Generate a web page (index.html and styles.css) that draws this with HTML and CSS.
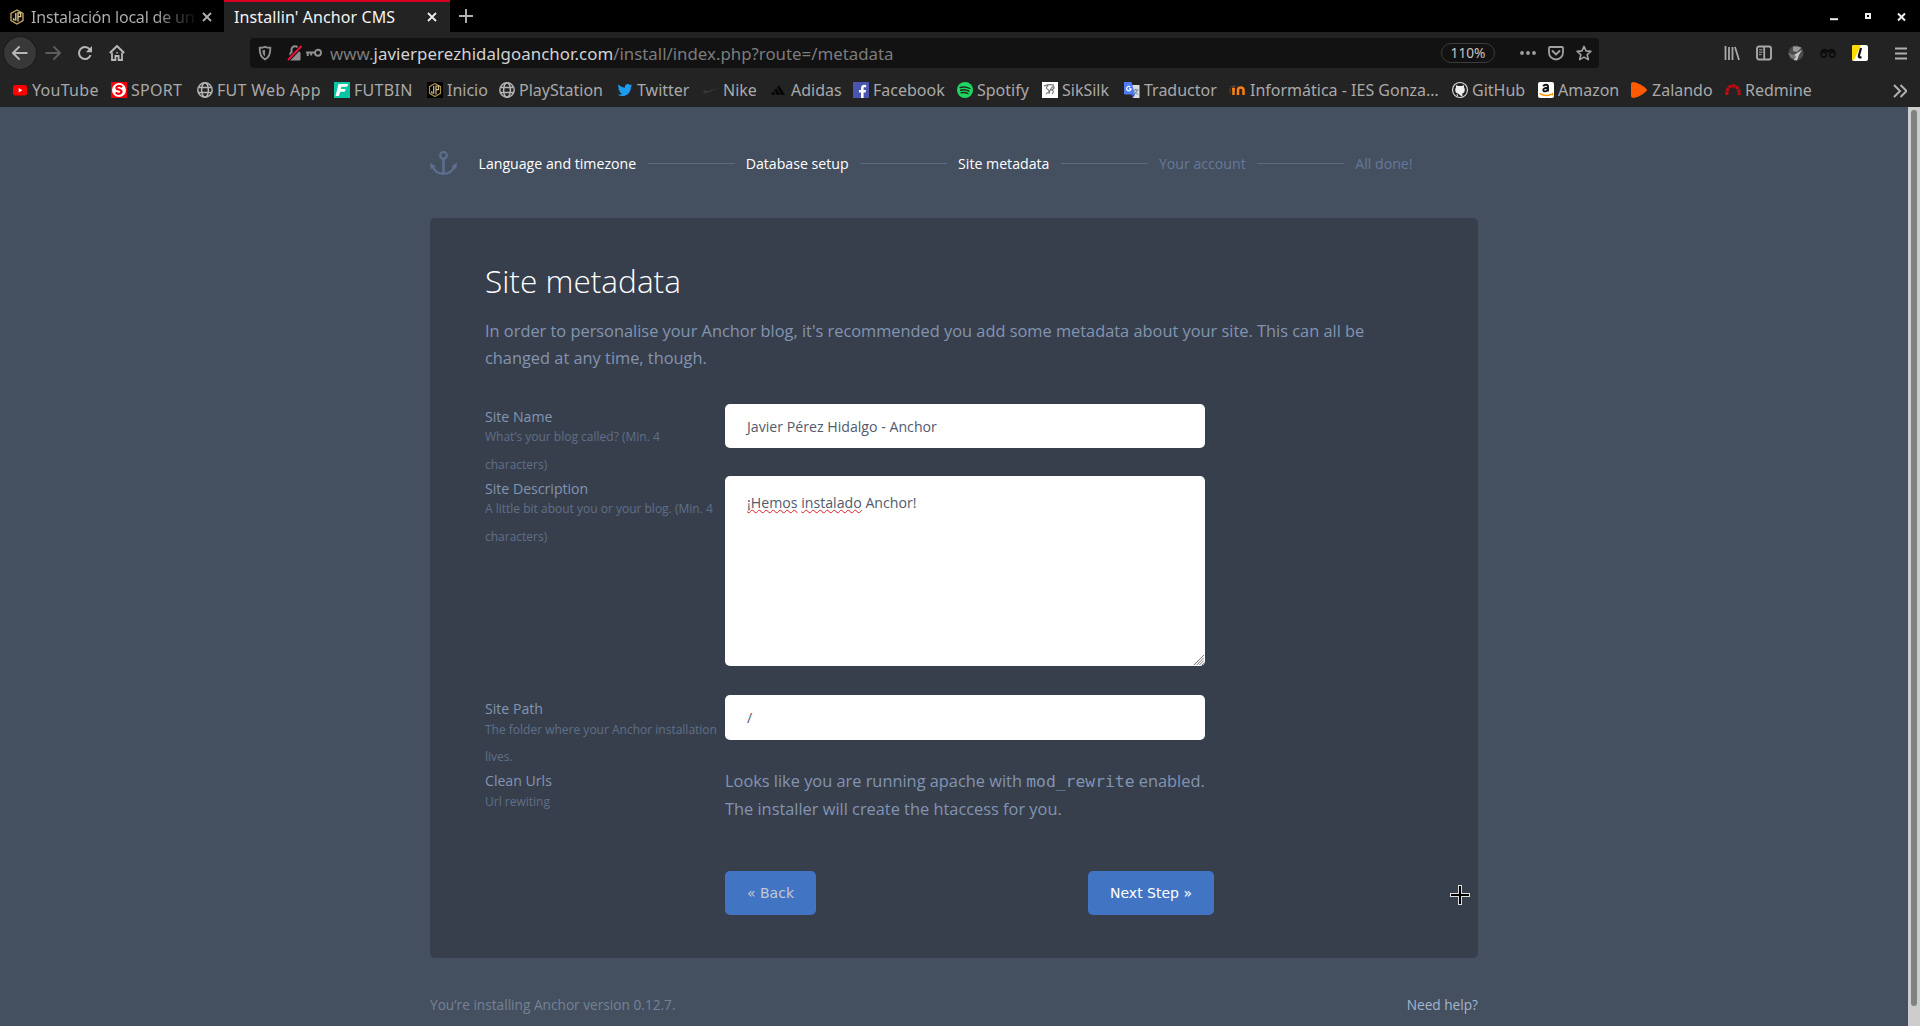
FILE: index.html
```html
<!DOCTYPE html>
<html lang="en">
<head>
<meta charset="utf-8">
<title>Installin' Anchor CMS</title>
<link rel="stylesheet" href="styles.css">
</head>
<body>
<div class="browser">
  <header class="tabs">
    <div class="tab">
      <svg class="ico" viewBox="0 0 16 16"><path d="M8 1l6 3.4v7.2L8 15l-6-3.4V4.4z" fill="#0b0a06" stroke="#c2a45c" stroke-width="1.4"/><path d="M4.6 9.2v1.6l2.2.3V4M9 12.5V4h2.7v3.6H9" fill="none" stroke="#e0cb92" stroke-width="1.3"/></svg>
      <span class="tab-title faded">Instalación local de un</span>
      <svg class="x" viewBox="0 0 10 10"><path d="M1 1l8 8M9 1L1 9"/></svg>
    </div>
    <div class="tab active">
      <span class="tab-title">Installin' Anchor CMS</span>
      <svg class="x" viewBox="0 0 10 10"><path d="M1 1l8 8M9 1L1 9"/></svg>
    </div>
    <svg class="plus" viewBox="0 0 14 14"><path d="M7 0v14M0 7h14"/></svg>
    <svg class="winbtns" viewBox="0 0 78 10"><path d="M1 7.2h8" stroke="#eee" stroke-width="2"/><rect x="37" y="2" width="4" height="4" fill="none" stroke="#eee" stroke-width="2"/><path d="M69 1.5l7 7M76 1.5l-7 7" stroke="#eee" stroke-width="2"/></svg>
  </header>

  <div class="toolbar">
    <span class="back"><svg class="ico" viewBox="0 0 16 16"><path d="M15.5 8H1M7.6 1.4L1 8l6.600 6.600" fill="none" stroke="#b6b6b6" stroke-width="2"/></svg></span>
    <svg class="ico fwd" viewBox="0 0 16 16"><path d="M.5 8H15M8.400 1.400L15 8l-6.600 6.600" fill="none" stroke="#5d5d5d" stroke-width="2"/></svg>
    <svg class="ico reload" viewBox="0 0 16 16"><path d="M13.600 10.200A6 6 0 1 1 12.600 4.200" fill="none" stroke="#b6b6b6" stroke-width="2"/><path d="M15 1v6.200H8.800z" fill="#b6b6b6"/></svg>
    <svg class="ico home" viewBox="0 0 16 16"><path d="M.8 8L8 1l7.200 7" fill="none" stroke="#b6b6b6" stroke-width="2"/><path d="M3 7.500V15h3.400v-4h3.200v4H13V7.500" fill="none" stroke="#b6b6b6" stroke-width="1.800"/><path d="M7.300 7h1.500v1.500H7.300z" fill="#b6b6b6"/></svg>
    <div class="url">
      <svg class="ico shield" viewBox="0 0 16 16"><path d="M8 1.800c2 .8 3.600 1 5.300 1 .2 5-.6 9.300-5.300 11.700C3.300 12.100 2.500 7.800 2.700 2.800c1.700 0 3.300-.2 5.300-1z" fill="none" stroke="#8f8f8f" stroke-width="1.900"/><path d="M8 4.700v6.800c-2-1.400-2.500-3.500-2.600-6.200 1 0 1.800-.2 2.600-.6z" fill="#8f8f8f"/></svg>
      <svg class="ico lock" viewBox="0 0 16 16"><path d="M4.500 8V4.800a3.500 3.500 0 0 1 7 0V8" fill="none" stroke="#8f8f8f" stroke-width="2"/><rect x="2.500" y="7" width="11" height="8.500" rx="1.200" fill="#8f8f8f"/><path d="M1 15L14.500 1" stroke="#121212" stroke-width="4"/><path d="M1 15L14.500 1" stroke="#e8123c" stroke-width="2"/></svg>
      <svg class="ico key" viewBox="0 0 16 16"><circle cx="12" cy="7.800" r="3" fill="none" stroke="#8f8f8f" stroke-width="1.900"/><path d="M9.500 7.500H0M1.800 7.500V11M5.200 7.500v3" fill="none" stroke="#8f8f8f" stroke-width="2"/></svg>
      <span class="addr">www.<b>javierperezhidalgoanchor.com</b>/install/index.php?route=/metadata</span>
      <span class="zoom">110%</span>
      <svg class="ico" viewBox="0 0 16 16" fill="#a0a0a0"><circle cx="2" cy="8" r="1.900"/><circle cx="8" cy="8" r="1.900"/><circle cx="14" cy="8" r="1.900"/></svg>
      <svg class="ico" viewBox="0 0 16 16"><path d="M2 2h12a1 1 0 0 1 1 1v4.500a7 7 0 0 1-14 0V3a1 1 0 0 1 1-1z" fill="none" stroke="#a0a0a0" stroke-width="1.800"/><path d="M4.500 6L8 9.400 11.500 6" fill="none" stroke="#a0a0a0" stroke-width="1.900" stroke-linecap="round"/></svg>
      <svg class="ico" viewBox="0 0 16 16"><path d="M8 1.400l2 4.500 4.900.5-3.700 3.300 1.100 4.900L8 12.100l-4.300 2.500 1.100-4.900L1.100 6.400 6 5.900z" fill="none" stroke="#a0a0a0" stroke-width="1.600" stroke-linejoin="round"/></svg>
    </div>
    <div class="exts">
      <svg class="ico" viewBox="0 0 16 16"><path d="M1.500 1v14M5 2v13M8.500 2v13M11 2l4 13" fill="none" stroke="#a8a8a8" stroke-width="1.800"/></svg>
      <svg class="ico" viewBox="0 0 16 16"><rect x="1" y="1.500" width="14" height="13" rx="2" fill="none" stroke="#a8a8a8" stroke-width="1.900"/><path d="M8.200 2v12" stroke="#a8a8a8" stroke-width="1.800"/><path d="M3 4.800h3.500M3 7.200h3.500M3 9.600h2.500" stroke="#a8a8a8"/></svg>
      <svg class="ico" viewBox="0 0 16 16"><circle cx="8" cy="8" r="7.500" fill="#4b4b4b"/><path d="M5 1.500h4l4.500 1L9 7 5 6z" fill="#999"/><path d="M6 10l8-5-3 5-2 5.500-3-.5z" fill="#c8c8c8"/><path d="M0 8l6 2 2 1-1 3-4-1z" fill="#777"/></svg>
      <svg class="ico" viewBox="0 0 16 16"><path d="M1 8Q3 4 5 5l3 1.500L11 5q2-1 4 3" fill="none" stroke="#0a0a0a" stroke-width="2"/><circle cx="3.700" cy="9.600" r="2.700" fill="none" stroke="#0a0a0a" stroke-width="1.500"/><circle cx="12.300" cy="9.600" r="2.700" fill="none" stroke="#0a0a0a" stroke-width="1.500"/></svg>
      <svg class="ico" viewBox="0 0 16 16"><rect width="16" height="16" rx="2" fill="#fff"/><path d="M2 0h7L2.500 14 .5 15.500Q0 15 0 14V2a2 2 0 0 1 2-2z" fill="#ffdc00"/><path d="M9 3L6.800 11q-.2 1.500 1.200 1.300h1.500" fill="none" stroke="#111" stroke-width="2.200"/></svg>
      <svg class="burger" viewBox="0 0 12 13"><path d="M0 1.500h12M0 6.500h12M0 11.500h12" stroke="#b0b0b0" stroke-width="1.800"/></svg>
    </div>
  </div>

  <nav class="bookmarks">
    <a class="spaced"><svg class="ico" viewBox="0 0 16 16"><rect x="1" y="3" width="14" height="10.500" rx="2.500" fill="#f00"/><path d="M6.700 6v4.500l3.600-2.200z" fill="#fff"/></svg>YouTube</a>
    <a class="spaced"><svg class="ico" viewBox="0 0 16 16"><path d="M0 0h16v16H0z" fill="#f3000b"/><circle cx="8" cy="8" r="7" fill="#fff"/><path d="M11 5.200Q9.500 3.400 7.200 4 4.800 4.800 5.800 6.700c.8 1 4.600.9 4.700 2.900 0 2.700-4 2.800-5.700.9" fill="none" stroke="#f3000b" stroke-width="2.200"/></svg>SPORT</a>
    <a class="spaced"><svg class="ico" viewBox="0 0 16 16"><g fill="none" stroke="#b4b4b4" stroke-width="1.500"><circle cx="8" cy="8" r="7.200"/><ellipse cx="8" cy="8" rx="3.400" ry="7.200"/><path d="M1.500 5.400h13M1.500 10.600h13"/></g></svg>FUT Web App</a>
    <a class="spaced"><svg class="ico" viewBox="0 0 16 16"><path d="M0 0h16v16H0z" fill="#08c5a4"/><path d="M4.500 2H14l-.8 2.800H7.300L6.800 7h4.800l-.8 2.700H6.100L5 14H1.500z" fill="#fff"/></svg>FUTBIN</a>
    <a><svg class="ico" viewBox="0 0 16 16"><path d="M0 0h16v16H0z"/><path d="M8 1.500l5.500 3.200v6.600L8 14.500l-5.500-3.200V4.700z" fill="none" stroke="#a88c48" stroke-width="1.200"/><path d="M4.700 9.200v1.600l2 .3V4M9 12.500V4h2.500v3.600H9" fill="none" stroke="#d2bd82" stroke-width="1.200"/></svg>Inicio</a>
    <a><svg class="ico" viewBox="0 0 16 16"><g fill="none" stroke="#b4b4b4" stroke-width="1.500"><circle cx="8" cy="8" r="7.200"/><ellipse cx="8" cy="8" rx="3.400" ry="7.200"/><path d="M1.500 5.400h13M1.500 10.600h13"/></g></svg>PlayStation</a>
    <a><svg class="ico" viewBox="-1 -1 26 26"><path fill="#1d9bf0" d="M23.950 4.570a10 10 0 0 1-2.820.77 4.960 4.960 0 0 0 2.160-2.720 9.900 9.900 0 0 1-3.120 1.180 4.920 4.920 0 0 0-8.380 4.480C7.690 8.090 4.070 6.130 1.640 3.160a4.920 4.920 0 0 0 1.520 6.570 4.900 4.900 0 0 1-2.230-.61v.06a4.920 4.920 0 0 0 3.950 4.830 5 5 0 0 1-2.210.08 4.940 4.940 0 0 0 4.600 3.420A9.870 9.870 0 0 1 0 19.540a14 14 0 0 0 7.550 2.210c9.050 0 14-7.500 14-13.980 0-.21 0-.42-.02-.63a9.900 9.900 0 0 0 2.420-2.570z"/></svg>Twitter</a>
    <a><svg class="ico" viewBox="0 0 16 16"><path d="M2 7C-1 11 1 12 4 11l12-5-11.500 3C1.500 9.700 1.500 8.500 2 7z" fill="#3a3a3a"/></svg>Nike</a>
    <a><svg class="ico" viewBox="0 0 16 16"><path d="M6 5l2.300-1.300L14 13h-3.500zM3 8l2.500-1.400L9.500 13H6zM0 11l2.500-1.300L4.600 13H1.200z" fill="#050505"/></svg>Adidas</a>
    <a><svg class="ico" viewBox="0 0 16 16"><path d="M0 0h16v16H0z" fill="#4a55b0"/><path d="M8 16v-5.500H6V8h2V6.200C8 4 9.300 2.800 11.300 2.800l1.900.1v2.300h-1.400c-1 0-1.200.5-1.200 1.300V8H13l-.4 2.500h-2V16z" fill="#fff"/></svg>Facebook</a>
    <a><svg class="ico" viewBox="0 0 16 16"><circle cx="8" cy="8" r="8" fill="#1ed760"/><path d="M3.200 5.500q5-1.500 9.700 1M3.700 8.200q4.500-1.200 8.300 1M4.200 10.800q3.700-1 6.800.8" fill="none" stroke="#1c2a20" stroke-width="1.400" stroke-linecap="round"/></svg>Spotify</a>
    <a><svg class="ico" viewBox="0 0 16 16"><path d="M0 0h16v16H0z" fill="#fff"/><path d="M2 4q5-2 10-1M6 3.500Q3 6 6 7.500T4 12M12 4q-4 2-5 8M11 4q3 2-1.500 4 3.500 1 .5 4" fill="none" stroke="#777" stroke-width="1.100"/></svg>SikSilk</a>
    <a><svg class="ico" viewBox="0 0 16 16"><path d="M6 3h9.500v13H9z" fill="#d9dce0"/><path d="M9.500 8h5M12 6.700V8M13.500 8q-1 3-4 4.500M10.500 9.500l3.500 3" stroke="#6a8790" fill="none"/><path d="M0 0h7.500L11 12.500H1a1 1 0 0 1-1-1z" fill="#4f7cf0"/><path d="M7 12.500h4L8.800 16z" fill="#3644b8"/><path d="M6.300 5A2.200 2.200 0 1 0 7 6.800H5" fill="none" stroke="#fff" stroke-width="1.200"/></svg>Traductor</a>
    <a class="moodle"><svg class="ico" viewBox="0 0 16 16"><path d="M0 5l5-2 3 1-4 1.500z" fill="#4a3f3a"/><path d="M1 6v5" stroke="#5a4030"/><path d="M4.500 13V7M3 7h3M9 13V8q0-2.500 2.700-2.500T14.500 8v5" fill="none" stroke="#f98012" stroke-width="2.500"/></svg>Informática - IES Gonza…</a>
    <a><svg class="ico" viewBox="0 0 16 16"><circle cx="8" cy="8" r="8" fill="#ddd"/><circle cx="8" cy="8" r="6.900" fill="#202020"/><path d="M6 15v-2.500q-2 .3-2.700-1.500M6 11.500Q3.200 11 3.200 7.700q0-1.200.8-2.200-.3-1 .1-2.200 1 0 2.100.8 1.800-.4 3.600 0 1.100-.8 2.100-.8.400 1.200.1 2.200.8 1 .8 2.200 0 3.300-2.800 3.800.4.500.4 1.300V15z" fill="#eee"/></svg>GitHub</a>
    <a><svg class="ico" viewBox="0 0 16 16"><rect width="16" height="16" rx="2" fill="#fff"/><path d="M5.200 4.200Q6 2.700 8 2.700t2 1.800v5M9.800 5.800Q5 6 5.300 8.200c.4 1.800 3.500 1.500 4.500-.9" fill="none" stroke="#111" stroke-width="1.900"/><path d="M1.500 11.300q6 4 12 .8M14.500 11v2.600" fill="none" stroke="#f90" stroke-width="1.500"/></svg>Amazon</a>
    <a class="moodle"><svg class="ico" viewBox="0 0 16 16"><path d="M0 2Q0 0 2.500 0 10 1.500 15.500 7q.9 1 0 2Q10 14.500 2.500 16 0 16 0 14z" fill="#ff5a00"/></svg>Zalando</a>
    <a><svg class="ico" viewBox="0 0 16 16"><path d="M1.800 13Q1.800 3.800 8 3.800T14.200 13" fill="none" stroke="#c00d12" stroke-width="3.200" stroke-dasharray="3.300 .6"/></svg>Redmine</a>
    <svg class="more" viewBox="0 0 14 14"><path d="M1 1l6 6-6 6M7.500 1l6 6-6 6" fill="none" stroke="#b0b0b0" stroke-width="2"/></svg>
  </nav>

  <div class="viewport">
    <div class="page">
      <div class="wrap">
        <ol class="steps">
          <li class="logo"><svg viewBox="0 0 27 24"><g fill="none" stroke="#5d6f8f"><circle cx="13.500" cy="4.300" r="3.300" stroke-width="2.200"/><path d="M13.500 7.500V22.500" stroke-width="2.600"/><path d="M2.500 14.500Q5 22.800 13.500 22.800T24.500 14.500" stroke-width="2.400"/></g><path d="M0 11.500l5.500 4-4.700 2.700zM27 11.500l-5.500 4 4.700 2.700z" fill="#5d6f8f"/></svg></li>
          <li>Language and timezone</li>
          <li>Database setup</li>
          <li>Site metadata</li>
          <li class="todo">Your account</li>
          <li class="todo">All done!</li>
        </ol>

        <section class="card">
          <h1>Site metadata</h1>
          <p class="intro">In order to personalise your Anchor blog, it's recommended you add some metadata about your site. This can all be<br>changed at any time, though.</p>
          <div class="row">
            <label>Site Name<small>What’s your blog called? (Min. 4<br>characters)</small></label>
            <div class="field">Javier Pérez Hidalgo - Anchor</div>
          </div>
          <div class="row tall">
            <label>Site Description<small>A little bit about you or your blog. (Min. 4<br>characters)</small></label>
            <div class="field area"><span class="typo">¡Hemos</span> <span class="typo">instalado</span> Anchor!<svg class="grip" viewBox="0 0 12 12"><path d="M1 12L12 1M4 12l8-8M7 12l5-5M10 12l2-2" stroke="#666" stroke-width="1"/></svg></div>
          </div>
          <div class="row lower">
            <label>Site Path<small>The folder where your Anchor installation<br>lives.</small></label>
            <div class="field path">/</div>
          </div>
          <div class="row lower last">
            <label>Clean Urls<small>Url rewiting</small></label>
            <p>Looks like you are running apache with <code>mod_rewrite</code> enabled.<br>The installer will create the htaccess for you.</p>
          </div>
          <div class="actions"><a class="btn prev">« Back</a><a class="btn">Next Step »</a></div>
        </section>

        <footer><span>You’re installing Anchor version 0.12.7.</span><a>Need help?</a></footer>
      </div>
    </div>
    <div class="scrollbar"><i></i></div>
  </div>
  <svg class="cursor" viewBox="0 0 22 22"><path d="M9 1h4v8h8v4h-8v8H9v-8H1V9h8z" fill="#ddd"/><path d="M11 2v18M2 11h18" stroke="#000" stroke-width="2"/></svg>
</div>
</body>
</html>
```

FILE: styles.css
```css
* { box-sizing: border-box; }
body { margin: 0; background: #44505f; font-family: "Noto Sans", sans-serif; font-size: 16px; }
svg { display: block; flex: none; }
.ico { width: 16px; height: 16px; }
.browser { position: relative; width: 1920px; height: 1026px; overflow: hidden; display: flex; flex-direction: column; white-space: nowrap; }

.tabs { height: 32px; background: #000; display: flex; flex: none; }
.tab { width: 224px; display: flex; align-items: center; padding: 2px 12px 0 9px; color: #b0b0b0; }
.tab .ico { margin-right: 6px; }
.tab-title { flex: 1; min-width: 0; line-height: 24px; }
.faded { margin-right: 8px; letter-spacing: -.2px; color: transparent; background: linear-gradient(to right, #b0b0b0 76%, #181818 98%); -webkit-background-clip: text; background-clip: text; }
.tab.active { width: 226px; background: #232323; border-top: 2px solid #d70022; padding: 0 13px 0 10px; color: #f4f4f4; letter-spacing: .1px; }
.x { width: 10px; height: 10px; stroke: #b0b0b0; stroke-width: 1.8; }
.active .x { stroke: #eee; }
.plus { width: 14px; height: 14px; margin: 9px 0 0 9px; stroke: #b4b4b4; stroke-width: 1.9; }
.winbtns { width: 78px; height: 10px; margin: 12px 13px 0 auto; }

.toolbar { height: 42px; flex: none; background: #232323; display: flex; align-items: center; padding-left: 4px; }
.back { width: 32px; height: 32px; border-radius: 50%; background: #383838; box-shadow: 0 0 0 1px #1b1b1b; display: flex; align-items: center; justify-content: center; }
.fwd { margin-left: 9px; }
.reload { margin-left: 16px; }
.home { margin-left: 16px; }
.url { width: 1349px; height: 30px; margin-left: 125px; background: #121212; border-radius: 4px; display: flex; align-items: center; padding: 0 7px; }
.shield { margin-right: 14px; }
.lock { margin-right: 3px; }
.key { margin-right: 8px; }
.addr { flex: 1; font-size: 16.83px; color: #7c7c7c; }
.addr b { font-weight: 400; color: #d2d2d2; letter-spacing: .08px; }
.zoom { width: 54px; height: 20px; border: 1px solid #3c3c3c; border-radius: 10px; font-size: 13.7px; line-height: 18px; text-align: center; color: #c4c4c4; margin-right: 25px; }
.url .zoom ~ .ico { margin-right: 12px; }
.url .zoom ~ .ico:last-child { margin-right: 0; }
.exts { display: flex; align-items: center; gap: 16px; margin-left: 125px; }
.burger { width: 12px; height: 13px; margin-left: 11px; }

.bookmarks { height: 33px; flex: none; background: #232323; display: grid; align-items: start; grid-template-columns: 99px 86px 137px 93px 72px 118px 86px 68px 82px 104px 85px 82px 105px 223px 86px 93px 94px 168px 14px; padding: 4px 0 0 12px; color: #a9a9a9; }
.bookmarks a { display: flex; align-items: center; gap: 4px; line-height: 24px; }
.bookmarks .spaced { letter-spacing: .3px; }
.bookmarks .moodle { gap: 5px; }
.more { width: 14px; height: 14px; margin-top: 6px; }

.viewport { flex: 1; display: flex; min-height: 0; font-family: "Open Sans", sans-serif; }
.page { flex: 1; background: #44505f; }
.scrollbar { width: 12px; background: #cdcdcd; padding: 3px 3px 20px; display: flex; }
.scrollbar i { flex: 1; border-radius: 3px; background: #7e8281; }
.wrap { width: 1048px; margin-left: 430px; padding-top: 44px; }

.steps { list-style: none; margin: 0; padding: 0; height: 24px; display: flex; align-items: center; font-size: 14.15px; color: #fff; }
.steps li { display: flex; align-items: center; line-height: 22px; padding-top: 2px; }
.steps li:not(.logo):not(:last-child)::after { content: ""; width: 87px; height: 1px; margin: -2px 11px 0 11.5px; background: #5a6b80; }
.steps .logo { width: 48.5px; padding-top: 0; }
.logo svg { width: 27px; height: 24px; }
.steps .todo { color: #66789a; }

.card { height: 740px; margin-top: 43px; padding: 38px 55px 0; background: #373f4d; border-radius: 5px; color: #8394b0; }
h1 { margin: 0; font-weight: 300; font-size: 31.6px; line-height: 50px; color: #fff; }
.intro { margin: 12px 0 32px; font-size: 16.37px; line-height: 27px; }
.row { display: grid; grid-template-columns: 240px 1fr; height: 72px; }
.row.tall { height: 219px; }
.row label { padding-top: 3px; font-size: 14.12px; line-height: 20px; }
.row.lower label { padding-top: 4px; }
.row small { display: block; font-size: 12px; line-height: 28px; margin-top: -4px; color: #606f87; }
.row.lower small { line-height: 27px; margin-top: -3.5px; }
.field { width: 480px; height: 44px; border-radius: 5px; background: #fff; color: #515b6d; font-size: 14.17px; line-height: 20px; padding: 13px 22px 11px; }
.area { position: relative; height: 190px; padding-top: 17px; }
.path { height: 45px; }
.typo { text-decoration: underline wavy #e01b24 1px; text-decoration-skip-ink: none; text-underline-offset: 1px; }
.grip { position: absolute; right: 1px; bottom: 1px; width: 11px; height: 11px; }
.row p { margin: 0; font-size: 16.37px; line-height: 28px; }
.row code { font-family: "DejaVu Sans Mono", monospace; font-size: 16.37px; line-height: 1; }
.row.last { height: 104px; }
.actions { width: 489px; margin-left: 240px; display: flex; justify-content: space-between; }
.btn { height: 44px; padding: 0 22px; border-radius: 5px; background: #4175c4; color: #fff; font: 14px/44px "DejaVu Sans", sans-serif; }
.prev { color: #c3c9d1; }
footer { margin-top: 36px; display: flex; justify-content: space-between; font-size: 13.68px; line-height: 22px; color: #748296; }
footer a { color: #a3b4d0; }
.cursor { position: absolute; left: 1449px; top: 884px; width: 22px; height: 22px; }
```
